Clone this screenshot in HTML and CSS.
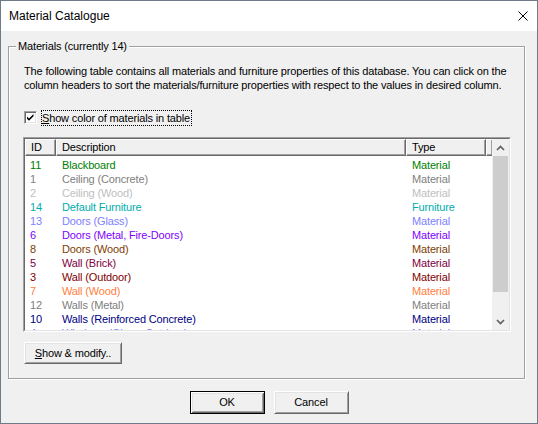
FILE: index.html
```html
<!DOCTYPE html>
<html>
<head>
<meta charset="utf-8">
<link rel="stylesheet" href="styles.css">
</head>
<body>
<div class="window">
  <div class="titlebar">
    <span class="title">Material Catalogue</span>
    <svg class="close" width="10" height="10" viewBox="0 0 10 10"><path d="M0.5 0.5 L9.5 9.5 M9.5 0.5 L0.5 9.5" stroke="#000" stroke-width="1" fill="none"/></svg>
  </div>
  <div class="content">
    <div class="group">
      <div class="group-label">Materials (currently 14)</div>
      <p class="desc">The following table contains all materials and furniture properties of this database. You can click on the<br>column headers to sort the materials/furniture properties with respect to the values in desired column.</p>
      <div class="check-row">
        <span class="checkbox"><svg width="9" height="9" viewBox="0 0 9 9"><path d="M1 3.5 L3 5.5 L7.5 1 L7.5 3.2 L3 7.7 L1 5.7 Z" fill="#000"/></svg></span>
        <span class="check-label"><u>S</u>how color of materials in table</span>
      </div>
      <div class="list">
        <div class="list-inner">
          <div class="lv">
            <div class="lv-head">
              <div class="hcell">ID</div>
              <div class="hcell">Description</div>
              <div class="hcell">Type</div>
              <div class="hcell"></div>
            </div>
            <div class="lv-rows">
              <div class="row c-green"><span>11</span><span>Blackboard</span><span>Material</span></div>
              <div class="row c-gray"><span>1</span><span>Ceiling (Concrete)</span><span>Material</span></div>
              <div class="row c-silver"><span>2</span><span>Ceiling (Wood)</span><span>Material</span></div>
              <div class="row c-teal"><span>14</span><span>Default Furniture</span><span>Furniture</span></div>
              <div class="row c-lblue"><span>13</span><span>Doors (Glass)</span><span>Material</span></div>
              <div class="row c-violet"><span>6</span><span>Doors (Metal, Fire-Doors)</span><span>Material</span></div>
              <div class="row c-brown"><span>8</span><span>Doors (Wood)</span><span>Material</span></div>
              <div class="row c-plum"><span>5</span><span>Wall (Brick)</span><span>Material</span></div>
              <div class="row c-maroon"><span>3</span><span>Wall (Outdoor)</span><span>Material</span></div>
              <div class="row c-orange"><span>7</span><span>Wall (Wood)</span><span>Material</span></div>
              <div class="row c-gray"><span>12</span><span>Walls (Metal)</span><span>Material</span></div>
              <div class="row c-navy"><span>10</span><span>Walls (Reinforced Concrete)</span><span>Material</span></div>
              <div class="row c-lblue"><span>4</span><span>Windows (Glass, Outdoor)</span><span>Material</span></div>
            </div>
          </div>
          <div class="vscroll">
            <div class="sb-btn"><svg width="9" height="6" viewBox="0 0 9 6"><path d="M1 5 L4.5 1.5 L8 5" stroke="#606060" stroke-width="1.7" fill="none"/></svg></div>
            <div class="sb-track"><div class="sb-thumb"></div></div>
            <div class="sb-btn"><svg width="9" height="6" viewBox="0 0 9 6"><path d="M1 1 L4.5 4.5 L8 1" stroke="#606060" stroke-width="1.7" fill="none"/></svg></div>
          </div>
        </div>
      </div>
      <button class="btn btn-show"><u>S</u>how &amp; modify..</button>
    </div>
    <div class="footer">
      <button class="btn btn-default">OK</button>
      <button class="btn">Cancel</button>
    </div>
  </div>
</div>
</body>
</html>
```
FILE: styles.css
```css
html, body {
  margin: 0;
  padding: 0;
  background: #f0f0f0;
}
.window {
  width: 538px;
  height: 424px;
  box-sizing: border-box;
  border: 1px solid #707b8a;
  background: #f0f0f0;
  display: flex;
  flex-direction: column;
  font-family: "Liberation Sans", Arial, sans-serif;
  font-size: 11px;
  letter-spacing: -0.15px;
  color: #000;
}
.titlebar {
  height: 30px;
  flex: none;
  background: #fff;
  display: flex;
  align-items: center;
  justify-content: space-between;
  padding: 0 9px 0 8px;
}
.title {
  font-size: 12px;
  letter-spacing: 0;
  color: #000;
}
.close {
  display: block;
}
.content {
  padding: 15px 0 0 7px;
}
.group {
  width: 517px;
  height: 333px;
  box-sizing: border-box;
  border: 1px solid #a0a0a0;
  box-shadow: inset 1px 1px #fff, 1px 1px #fff;
  padding: 0 0 0 15px;
}
.group-label {
  display: block;
  width: fit-content;
  margin: -8px 0 0 -8px;
  padding: 0 2px;
  line-height: 14px;
  height: 14px;
  background: #f0f0f0;
}
.desc {
  margin: 11px 0 0 0;
  line-height: 14px;
  white-space: nowrap;
}
.check-row {
  margin-top: 18px;
  height: 16px;
  display: flex;
  align-items: flex-start;
}
.checkbox {
  width: 13px;
  height: 13px;
  box-sizing: border-box;
  margin-top: 1px;
  border: 1px solid;
  border-color: #a0a0a0 #fff #fff #a0a0a0;
  box-shadow: inset 1px 1px #696969, inset -1px -1px #e3e3e3;
  background: #fff;
  display: flex;
  align-items: center;
  justify-content: center;
  margin-right: 4px;
}
.checkbox svg {
  display: block;
}
.check-label {
  border: 1px dotted #000;
  padding: 0 1px 0 0;
  line-height: 14px;
  height: 14px;
}
.list {
  margin: 11px 0 0 -1px;
  width: 488px;
  height: 195px;
  box-sizing: border-box;
  border: 1px solid;
  border-color: #a0a0a0 #fff #fff #a0a0a0;
}
.list-inner {
  height: 100%;
  box-sizing: border-box;
  border: 1px solid;
  border-color: #696969 #e3e3e3 #e3e3e3 #696969;
  display: flex;
}
.lv {
  flex: 1;
  background: #fff;
  overflow: hidden;
  display: flex;
  flex-direction: column;
}
.lv-head {
  display: grid;
  grid-template-columns: 31px 350px 80px 1fr;
  height: 17px;
  flex: none;
}
.hcell {
  box-sizing: border-box;
  background: #f0f0f0;
  border-top: 1px solid #fff;
  border-left: 1px solid #fff;
  border-right: 1px solid #696969;
  border-bottom: 1px solid #696969;
  box-shadow: inset -1px -1px #a0a0a0;
  padding-left: 5px;
  line-height: 15px;
  white-space: nowrap;
  overflow: hidden;
}
.lv-rows {
  padding-top: 2px;
  overflow: hidden;
}
.row {
  display: grid;
  grid-template-columns: 31px 350px 80px 1fr;
  height: 14px;
  line-height: 14px;
  white-space: nowrap;
}
.row span {
  padding-left: 6px;
}
.row span:first-child {
  padding-left: 5px;
}
.c-green { color: #008000; }
.c-gray { color: #808080; }
.c-silver { color: #c0c0c0; }
.c-teal { color: #00acac; }
.c-lblue { color: #8080ff; }
.c-violet { color: #8000ff; }
.c-brown { color: #804000; }
.c-plum { color: #800040; }
.c-maroon { color: #800000; }
.c-orange { color: #ff8040; }
.c-navy { color: #000080; }
.vscroll {
  width: 17px;
  flex: none;
  background: #f0f0f0;
  display: flex;
  flex-direction: column;
}
.sb-btn {
  height: 17px;
  flex: none;
  display: flex;
  align-items: center;
  justify-content: center;
}
.sb-btn svg {
  display: block;
}
.sb-track {
  flex: 1;
  padding: 0 1px;
}
.sb-thumb {
  height: 136px;
  background: #cdcdcd;
}
.btn {
  font-family: "Liberation Sans", Arial, sans-serif;
  font-size: 11px;
  letter-spacing: -0.15px;
  color: #000;
  background: #f0f0f0;
  box-sizing: border-box;
  border: 1px solid;
  border-color: #fff #696969 #696969 #fff;
  box-shadow: inset 1px 1px #e3e3e3, inset -1px -1px #a0a0a0;
  padding: 0;
  margin: 0;
  width: 75px;
  height: 23px;
  line-height: 19px;
  display: block;
}
.btn-show {
  margin-top: 10px;
  width: 98px;
  height: 22px;
  line-height: 18px;
}
.btn-default {
  border: 1px solid #000;
  box-shadow: inset 1px 1px #fff, inset -1px -1px #696969, inset 2px 2px #e3e3e3, inset -2px -2px #a0a0a0;
}
.footer {
  margin-top: 12px;
  margin-left: -7px;
  display: flex;
  justify-content: center;
  gap: 9px;
}
```
